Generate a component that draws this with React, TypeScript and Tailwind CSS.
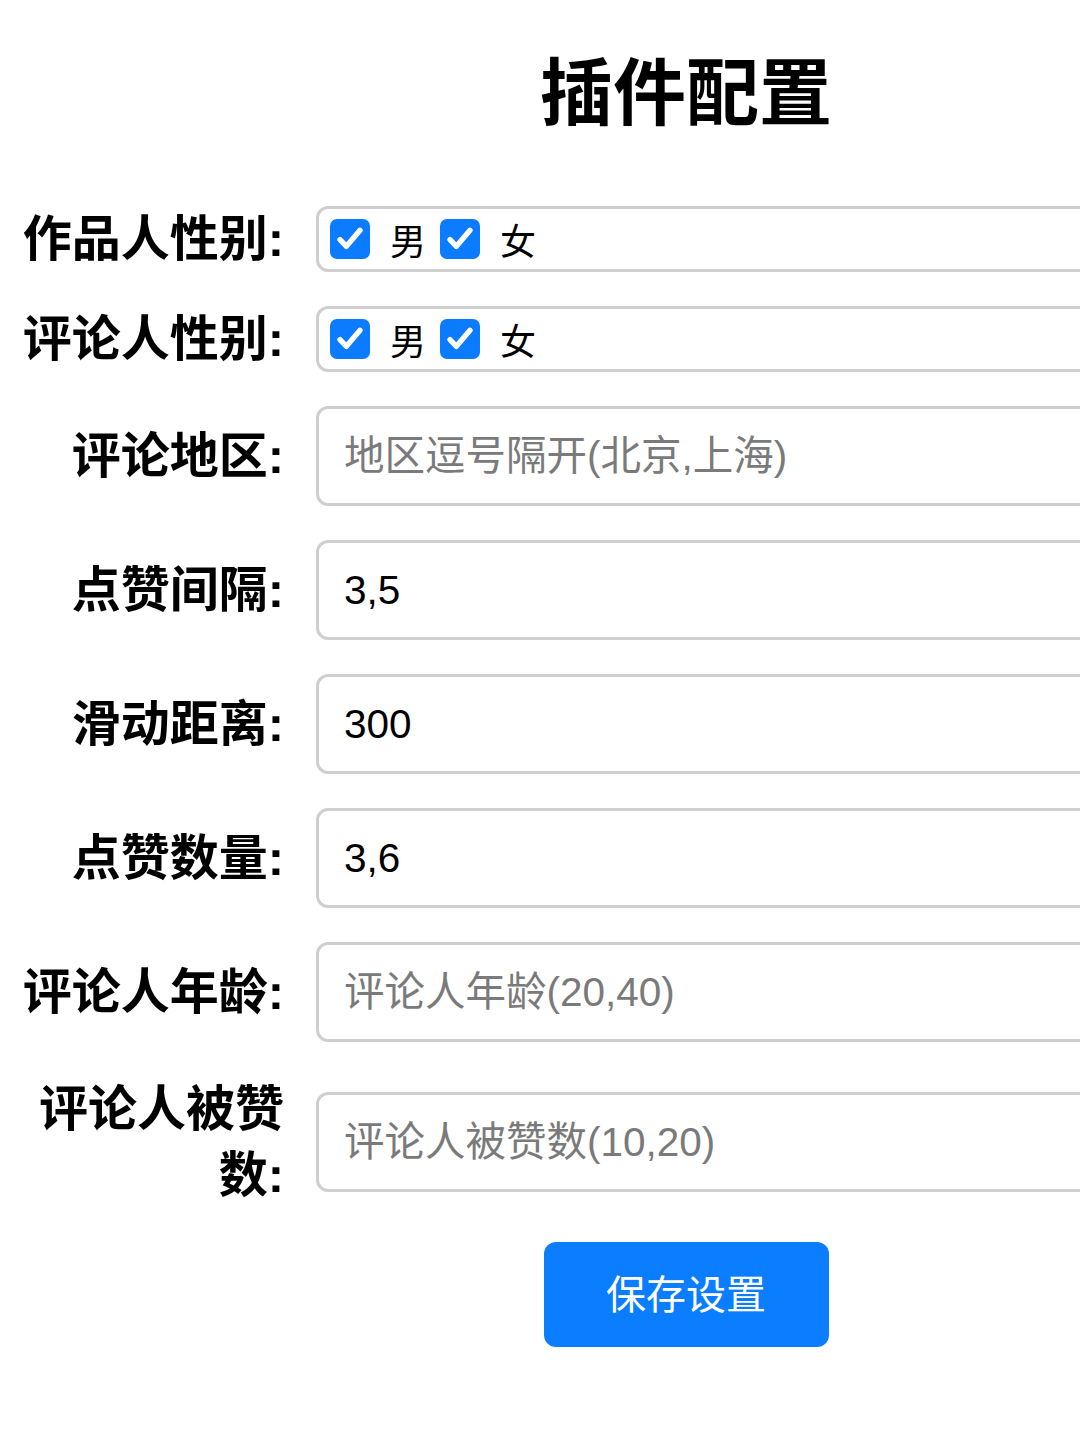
const font = { fontFamily: '"Liberation Sans", "Noto Sans CJK SC", sans-serif' };

function Check() {
    return (
        <span className="w-[40px] h-[40px] rounded-[7px] bg-[#0b7bff] flex items-center justify-center shrink-0">
            <svg width="32" height="32" viewBox="0 0 24 24" fill="none">
                <path d="M4.5 12.5l4.8 5L19.5 5.5" stroke="white" strokeWidth="4" strokeLinecap="round" strokeLinejoin="round" />
            </svg>
        </span>
    );
}

function GenderRow({ label }: { label: string }) {
    return (
        <div className="flex items-center gap-[32px]">
            <label className="w-[266px] shrink-0 text-right text-[49px] font-bold leading-[66px] text-black">{label}</label>
            <div className="flex-1 h-[66px] border-[3px] border-[#cfcfcf] rounded-[12px] flex items-center pl-[11px]">
                <Check />
                <span className="ml-[20px] mr-[14px] mt-[8px] text-[36px] leading-none text-black">男</span>
                <Check />
                <span className="ml-[20px] mt-[8px] text-[36px] leading-none text-black">女</span>
            </div>
        </div>
    );
}

function InputRow({ label, value, placeholder }: { label: string, value?: string, placeholder?: string }) {
    return (
        <div className="flex items-center gap-[32px]">
            <label className="w-[266px] shrink-0 text-right text-[49px] font-bold leading-[66px] text-black">{label}</label>
            <input
                type="text"
                readOnly
                defaultValue={value}
                placeholder={placeholder}
                style={font}
                className="flex-1 h-[100px] border-[3px] border-[#cfcfcf] rounded-[12px] pl-[25px] text-[40.5px] text-black placeholder:text-[#7a7a7a] outline-none"
            />
        </div>
    );
}

export default function App() {
    return (
        <div className="w-[1080px] min-h-[1440px] overflow-hidden bg-white" style={font}>
            <div className="w-[1372px] px-[18px]">
                <h1 className="text-center text-[73px] font-bold leading-none pt-[57px] mb-[76px] text-black">插件配置</h1>

                <div className="flex flex-col gap-[34px]">
                    <GenderRow label="作品人性别:" />
                    <GenderRow label="评论人性别:" />
                    <InputRow label="评论地区:" placeholder="地区逗号隔开(北京,上海)" />
                    <InputRow label="点赞间隔:" value="3,5" />
                    <InputRow label="滑动距离:" value="300" />
                    <InputRow label="点赞数量:" value="3,6" />
                    <InputRow label="评论人年龄:" placeholder="评论人年龄(20,40)" />
                    <InputRow label="评论人被赞数:" placeholder="评论人被赞数(10,20)" />
                    <button className="mx-auto w-[285px] h-[105px] rounded-[12px] bg-[#0b7dff] text-white text-[40px]">
                        保存设置
                    </button>
                </div>
            </div>
        </div>
    );
}
